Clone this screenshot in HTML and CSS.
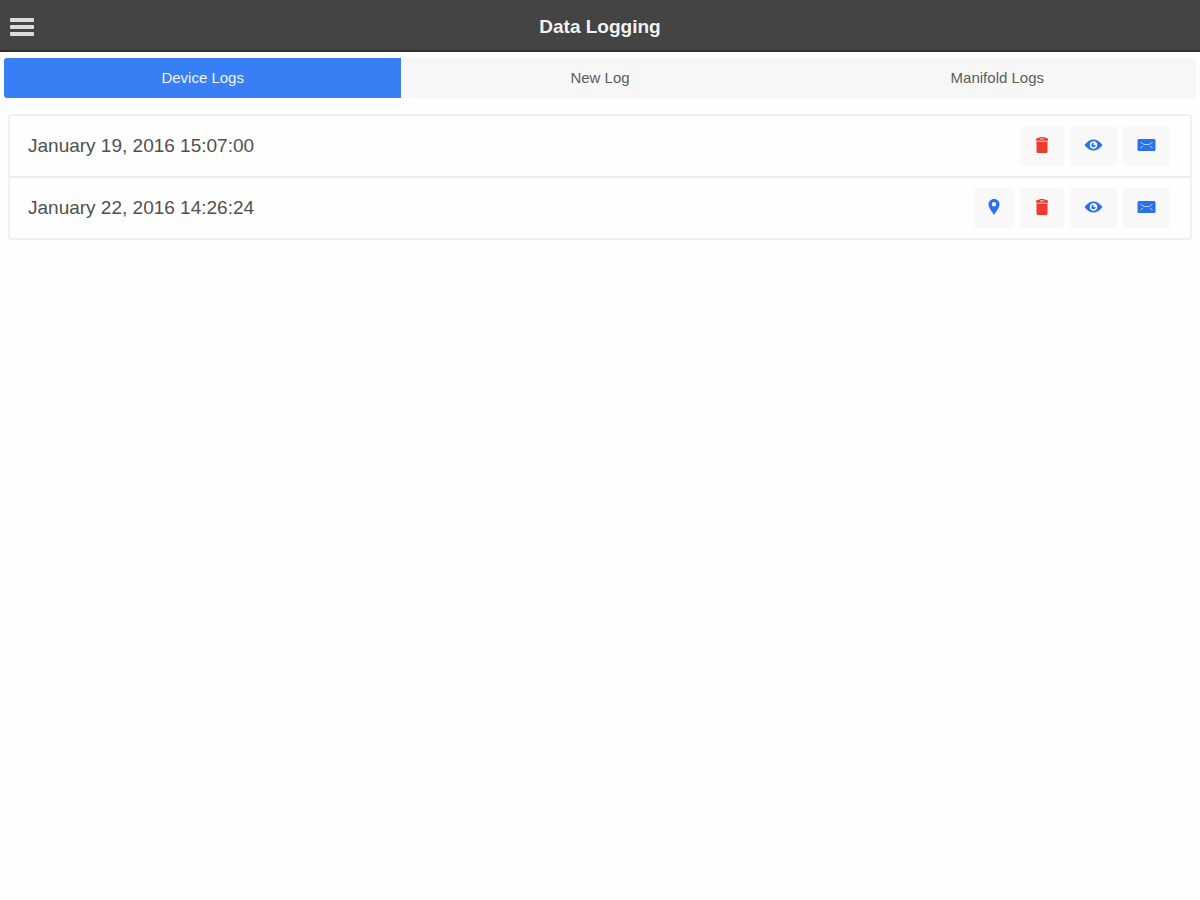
FILE: index.html
```html
<!DOCTYPE html>
<html lang="en">
<head>
    <meta charset="UTF-8">
    <meta name="viewport" content="width=device-width, initial-scale=1.0">
    <title>Data Logging</title>
    <link rel="stylesheet" href="styles.css">
</head>
<body>
    <svg class="sprite" aria-hidden="true">
        <symbol id="pin" viewBox="0 0 12 18">
            <path fill-rule="evenodd" d="M6 1C2.900 1 .5 3.300 .5 6.300C.5 10 4 13.500 6 17C8 13.500 11.500 10 11.500 6.300C11.500 3.300 9.100 1 6 1ZM6 4A2.200 2.200 0 1 1 6 8.400A2.200 2.200 0 0 1 6 4Z"/>
        </symbol>
        <symbol id="trash" viewBox="0 0 14 18">
            <path fill-rule="evenodd" d="M1 3.500C1 2.600 2 2 4 1.800L5 1H9L10 1.800C12 2 13 2.600 13 3.500V4.800H1ZM5 2.600V3.200H9V2.600Z"/>
            <path d="M1.500 5.400H12.500V15.500Q12.500 17 11 17H3Q1.500 17 1.500 15.500Z"/>
        </symbol>
        <symbol id="eye" viewBox="0 0 18 12">
            <path fill-rule="evenodd" d="M0 6C3 2 6 .5 9 .5S15 2 18 6C15 10 12 11.500 9 11.500S3 10 0 6ZM9 2.300A3.700 3.700 0 1 0 9 9.700A3.700 3.700 0 1 0 9 2.300Z"/>
            <path d="M9 3.800A2.200 2.200 0 1 0 11.200 6H9Z"/>
        </symbol>
        <symbol id="mail" viewBox="0 0 18 12">
            <rect width="18" height="12" rx="1.500"/>
            <path d="M3 3L6.500 5.500H11.500L15 3M3 9L5.500 7M15 9L12.500 7" fill="none" stroke="#b5cffb" stroke-width="1"/>
        </symbol>
    </svg>

    <header class="header">
        <button class="menu-button" aria-label="Menu">
            <span></span>
            <span></span>
            <span></span>
        </button>
        <h1>Data Logging</h1>
    </header>

    <nav class="tabs">
        <button class="tab active">Device Logs</button>
        <button class="tab">New Log</button>
        <button class="tab">Manifold Logs</button>
    </nav>

    <ul class="log-list">
        <li class="log">
            <span class="log-date">January 19, 2016 15:07:00</span>
            <button class="action delete" aria-label="Delete"><svg class="icon-trash"><use href="#trash"/></svg></button>
            <button class="action" aria-label="View"><svg class="icon-wide"><use href="#eye"/></svg></button>
            <button class="action" aria-label="Email"><svg class="icon-wide"><use href="#mail"/></svg></button>
        </li>
        <li class="log">
            <span class="log-date">January 22, 2016 14:26:24</span>
            <button class="action" aria-label="Location"><svg class="icon-pin"><use href="#pin"/></svg></button>
            <button class="action delete" aria-label="Delete"><svg class="icon-trash"><use href="#trash"/></svg></button>
            <button class="action" aria-label="View"><svg class="icon-wide"><use href="#eye"/></svg></button>
            <button class="action" aria-label="Email"><svg class="icon-wide"><use href="#mail"/></svg></button>
        </li>
    </ul>
</body>
</html>
```
FILE: styles.css
```css
* {
    box-sizing: border-box;
}

body {
    font-family: "Liberation Sans", Arial, sans-serif;
    margin: 0;
    background: #fefefe;
    color: #505050;
}

button {
    font-family: inherit;
    border: none;
    border-radius: 0;
    margin: 0;
    cursor: pointer;
}

.sprite {
    display: none;
}

.header {
    display: grid;
    grid-template-columns: 44px 1fr 44px;
    align-items: center;
    height: 52px;
    padding-top: 4px;
    background: #444;
    border-bottom: 2px solid #303030;
}

.header h1 {
    margin: 0;
    font-size: 19px;
    line-height: 24px;
    text-align: center;
    color: #f2f2f2;
}

.menu-button {
    display: flex;
    flex-direction: column;
    gap: 3px;
    padding: 10px;
    background: none;
}

.menu-button span {
    width: 24px;
    height: 4px;
    border-radius: 1px;
    background: #dcdcdc;
}

.tabs {
    display: flex;
    margin: 6px 4px 16px;
}

.tab {
    flex: 1;
    height: 40px;
    padding: 0 0 2px;
    font-size: 15px;
    background: #f7f7f7;
    color: #5c5c5c;
}

.tab.active {
    background: #387ef5;
    color: #f0f5ff;
    border-radius: 3px 0 0 3px;
}

.log-list {
    list-style: none;
    margin: 0 8px;
    padding: 0;
    border: 2px solid #f0f0f0;
    border-radius: 3px;
}

.log {
    display: flex;
    align-items: center;
    gap: 6px;
    padding: 10px 20px 10px 18px;
}

.log + .log {
    border-top: 2px solid #ececec;
}

.log-date {
    flex: 1;
    font-size: 19px;
    line-height: 24px;
}

.action {
    display: flex;
    align-items: center;
    height: 40px;
    padding: 0 14px 2px;
    border-radius: 3px;
    background: #f8f8f8;
    color: #2871ee;
}

.action.delete {
    color: #ef3a2f;
}

.action svg {
    fill: currentColor;
}

.icon-trash {
    width: 16px;
    height: 18px;
}

.icon-wide {
    width: 19px;
    height: 12px;
}

.icon-pin {
    width: 12px;
    height: 18px;
}
```
